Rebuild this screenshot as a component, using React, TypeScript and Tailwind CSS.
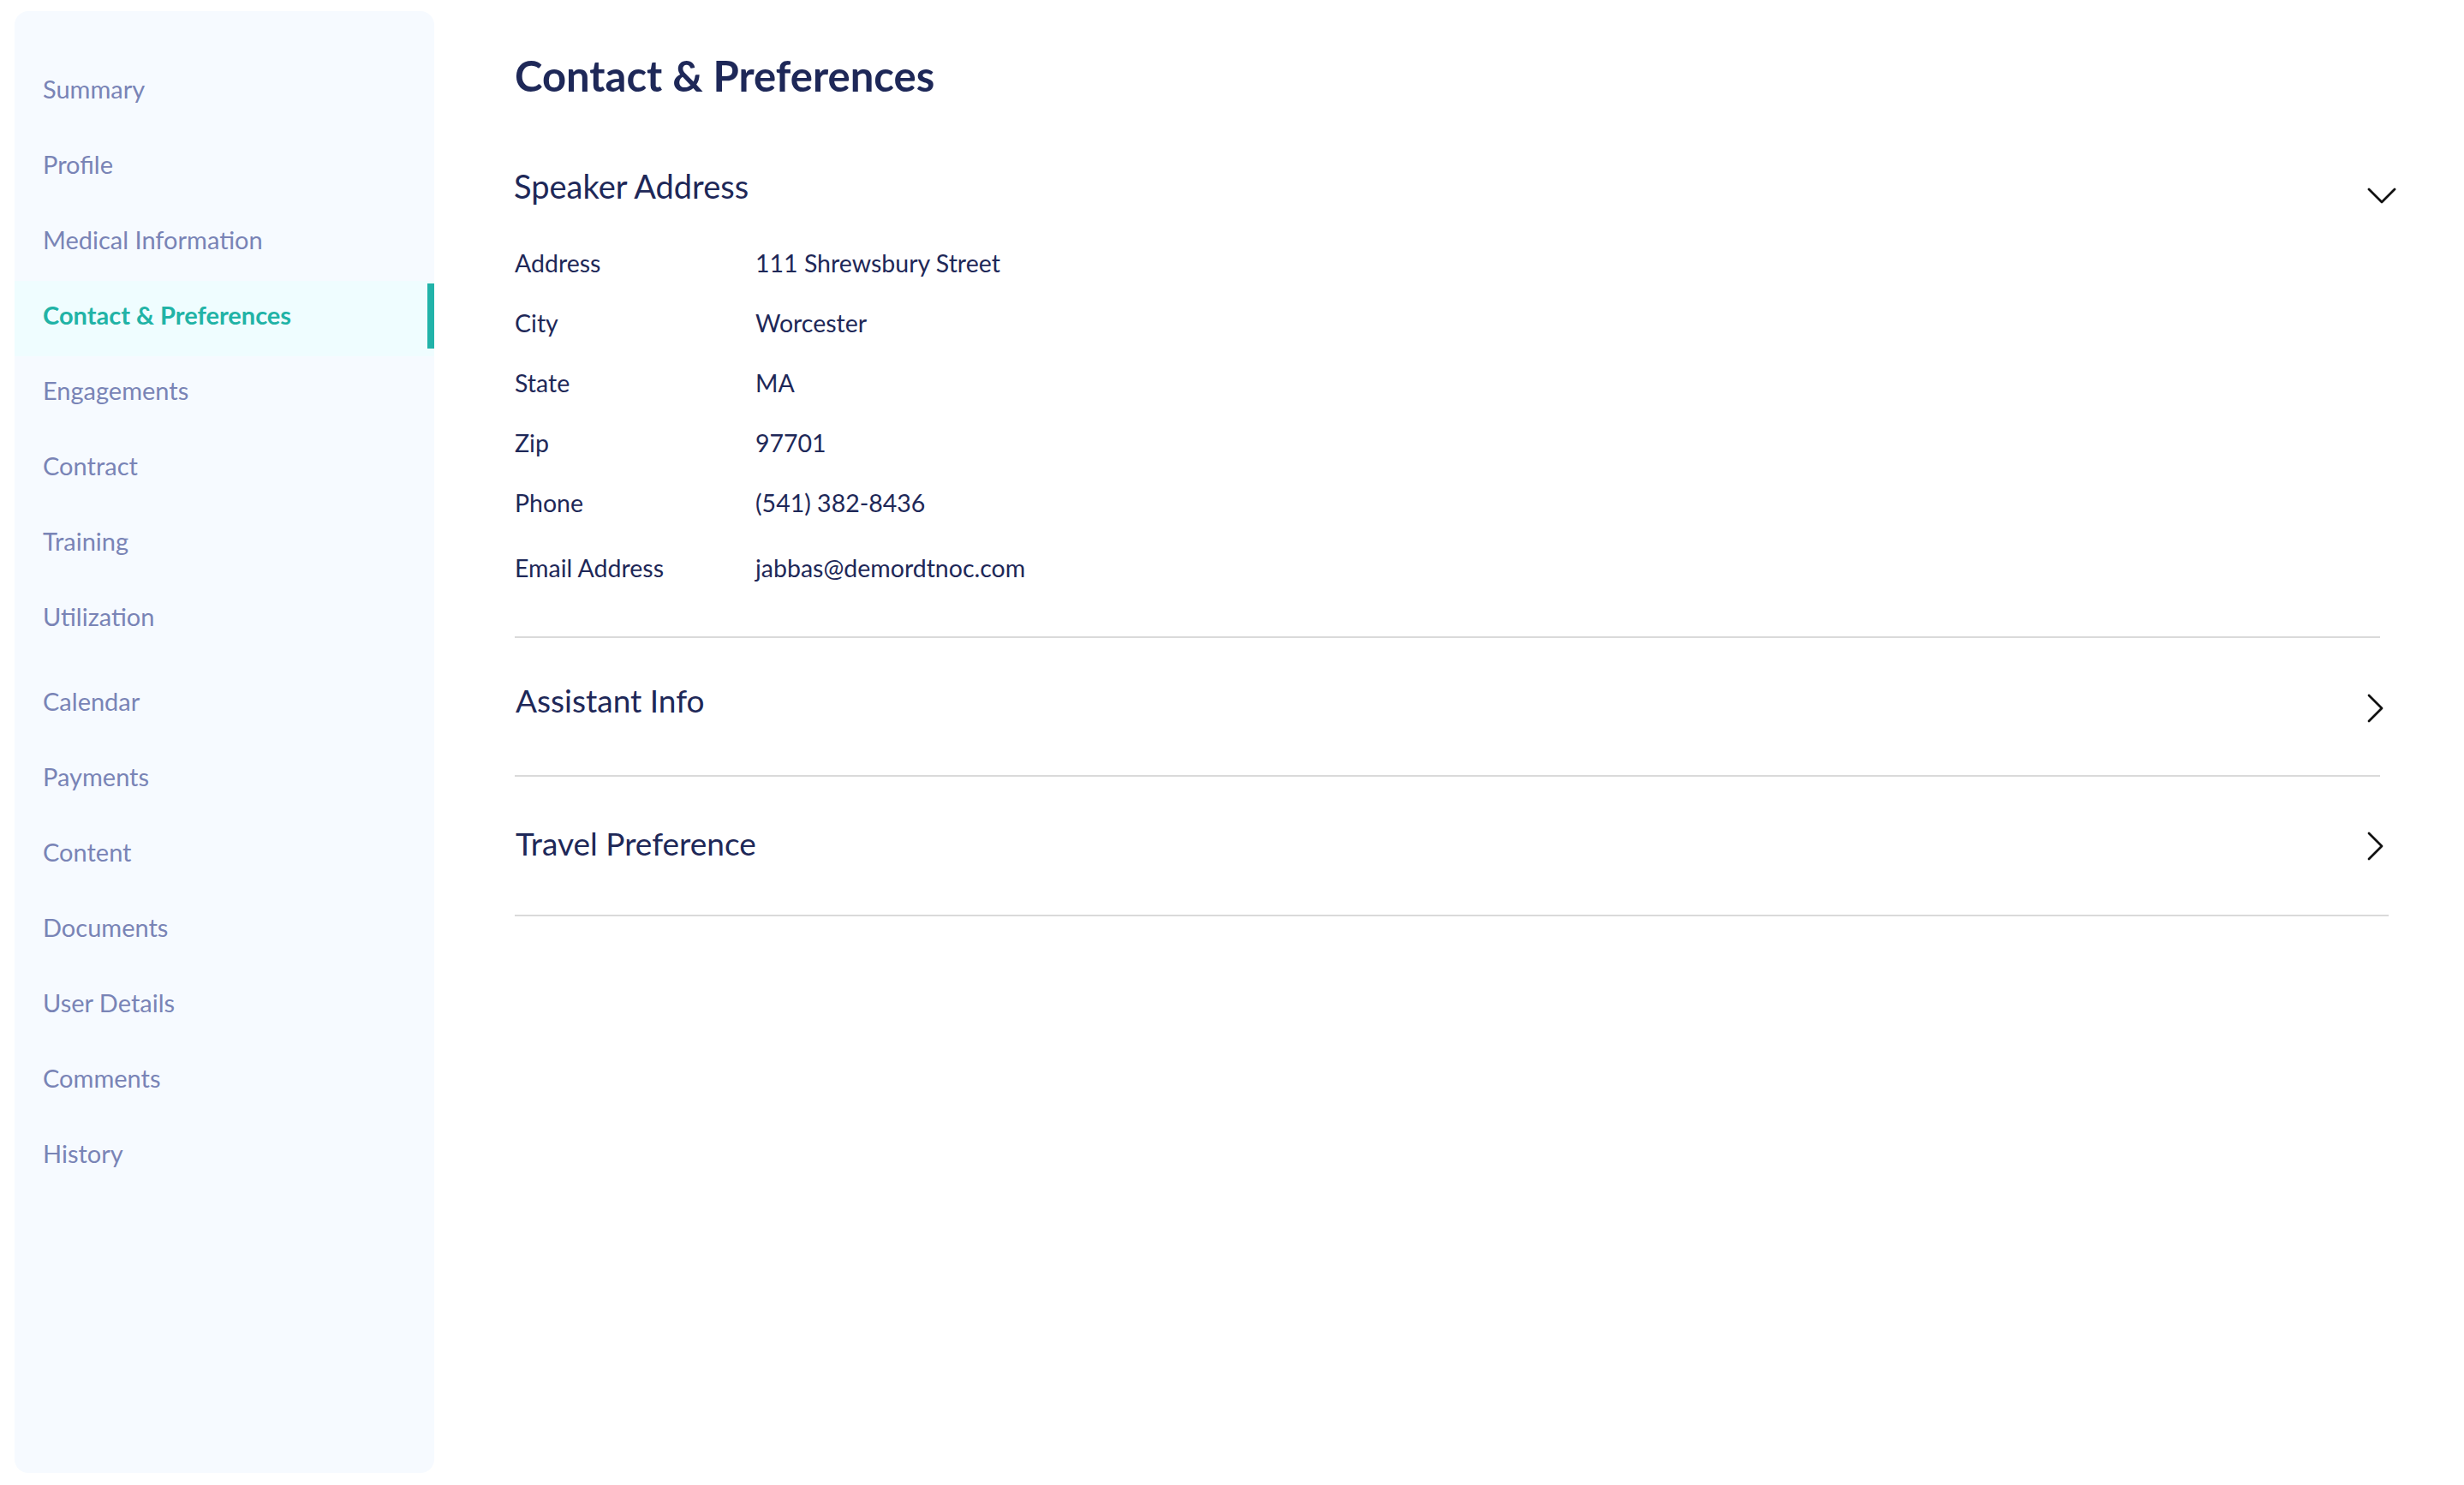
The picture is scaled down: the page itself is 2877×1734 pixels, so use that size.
import React from "react";

const nav = [
  "Summary",
  "Profile",
  "Medical Information",
  "Contact & Preferences",
  "Engagements",
  "Contract",
  "Training",
  "Utilization",
  "Calendar",
  "Payments",
  "Content",
  "Documents",
  "User Details",
  "Comments",
  "History",
];

const rows: [string, string][] = [
  ["Address", "111 Shrewsbury Street"],
  ["City", "Worcester"],
  ["State", "MA"],
  ["Zip", "97701"],
  ["Phone", "(541) 382-8436"],
];

function ChevronRight() {
  return (
    <svg width="20" height="34" viewBox="0 0 20 34" fill="none">
      <path d="M2 2 L17 17 L2 32" stroke="#111" strokeWidth="2.8" strokeLinecap="round" strokeLinejoin="round" />
    </svg>
  );
}

function ChevronDown() {
  return (
    <svg width="34" height="20" viewBox="0 0 34 20" fill="none">
      <path d="M2 2 L17 17 L32 2" stroke="#111" strokeWidth="2.8" strokeLinecap="round" strokeLinejoin="round" />
    </svg>
  );
}

export default function App() {
  return (
    <div
      className="flex min-h-[1734px] w-full bg-white"
      style={{ fontFamily: "Lato, 'Open Sans', sans-serif" }}
    >
      <aside className="ml-[17px] mt-[13px] mb-[14px] w-[490px] shrink-0 rounded-[16px] bg-[#f6faff] pt-[51px]">
        {nav.map((item, i) => {
          const active = item === "Contact & Preferences";
          return (
            <div
              key={item}
              className={
                "relative flex h-[88px] items-center pl-[33px] text-[29px] " +
                (active ? "bg-[#effdff] font-bold text-[#21b3a6]" : "text-[#7984b6]") +
                (i === 8 ? " mt-[11px]" : "")
              }
            >
              <span className="-mt-[8px]">{item}</span>
              {active && (
                <div className="absolute right-0 top-[3px] h-[76px] w-[8px] bg-[#21b3a9]" />
              )}
            </div>
          );
        })}
      </aside>

      <main className="flex-1 pl-[94px] pr-[88px] text-[#1e2858]">
        <h1 className="mt-[58px] text-[49px] font-bold leading-[60px]">Contact &amp; Preferences</h1>

        <div className="mt-[75px] flex items-start justify-between">
          <h2 className="-ml-[1px] text-[38px] leading-[48px]">Speaker Address</h2>
          <div className="-mr-[9px] mt-[26px]"><ChevronDown /></div>
        </div>

        <div className="mt-[31px] flex flex-col text-[28.5px]">
          {rows.map(([k, v]) => (
            <div key={k} className="flex h-[70px] items-center">
              <div className="w-[281px] shrink-0">{k}</div>
              <div>{v}</div>
            </div>
          ))}
          <div className="mt-[6px] flex h-[70px] items-center">
            <div className="w-[281px] shrink-0">Email Address</div>
            <div>jabbas@demordtnoc.com</div>
          </div>
        </div>

        <div className="mt-[45px] mr-[10px] h-[2px] bg-[#dadada]" />
        <div className="flex h-[160px] items-center justify-between pl-[1px] pr-[5px]">
          <h2 className="-mt-[14px] text-[37px]">Assistant Info</h2>
          <div className="mt-[4px]"><ChevronRight /></div>
        </div>
        <div className="mr-[10px] h-[2px] bg-[#dadada]" />
        <div className="flex h-[161px] items-center justify-between pl-[1px] pr-[5px]">
          <h2 className="-mt-[6px] text-[37px]">Travel Preference</h2>
          <div><ChevronRight /></div>
        </div>
        <div className="h-[2px] bg-[#dadada]" />
      </main>
    </div>
  );
}
